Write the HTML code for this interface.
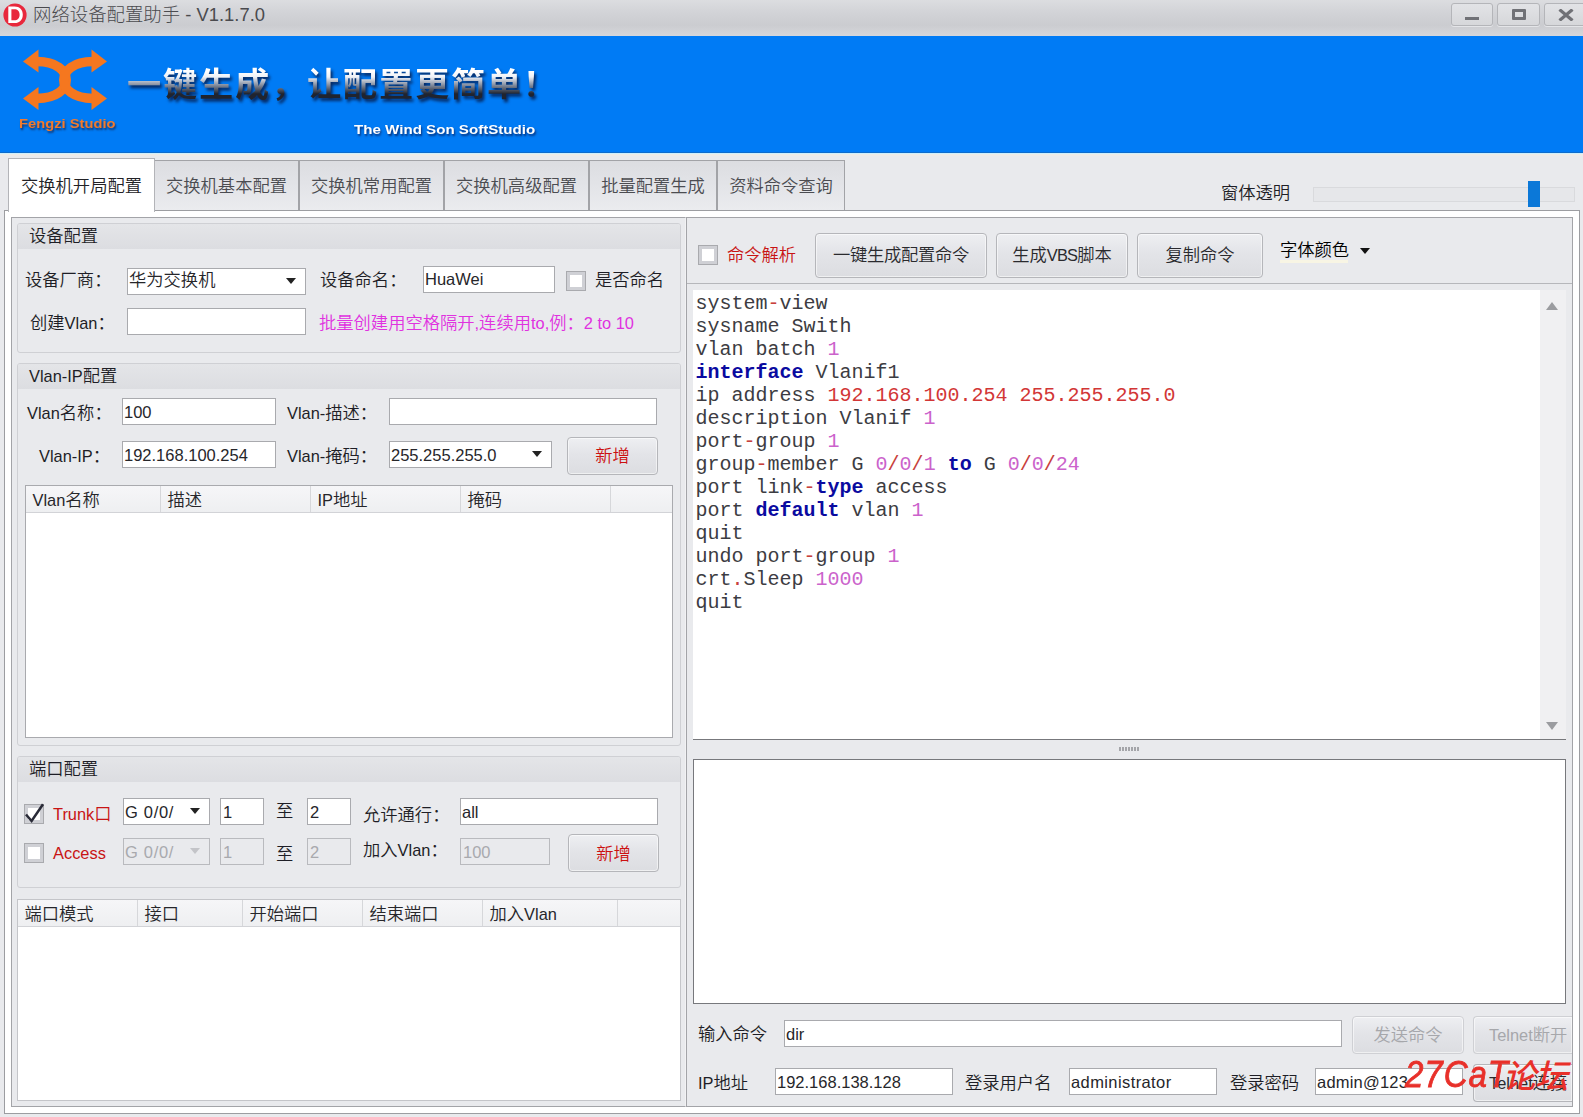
<!DOCTYPE html>
<html lang="zh-CN">
<head>
<meta charset="utf-8">
<title>网络设备配置助手 - V1.1.7.0</title>
<style>
*{box-sizing:border-box;margin:0;padding:0}
html,body{width:1583px;height:1117px;overflow:hidden;background:#e9eaed}
body{position:relative;font-family:"Liberation Sans","Noto Sans CJK SC",sans-serif;font-size:17.3px;color:#1e1e26;font-weight:350}
.a{position:absolute;white-space:nowrap}
.t{position:absolute;white-space:nowrap;line-height:24px;height:24px}
.lat{font-size:16.4px}
/* title bar */
#title{left:0;top:0;width:1583px;height:36px;background:linear-gradient(#dcdde0 0,#d2d3d7 35%,#cbccd0 70%,#d6d7db 100%)}
#title .cap{left:33px;top:3px;font-size:18.4px;line-height:24px;color:#4a4a4e;font-weight:300}
.wb{position:absolute;top:3px;height:23px;border:1px solid #b4b5b9;border-radius:3px;background:linear-gradient(#e2e3e6,#d6d7da);box-shadow:0 1px 0 #e4e5e8}
/* banner */
#banner{left:0;top:36px;width:1583px;height:117px;background:#007bf5}
#fz{left:19px;top:79px;font-size:13.5px;line-height:18px;font-weight:700;color:#f27a2c;transform-origin:0 0;transform:scaleX(1.09);text-shadow:1px 2px 2px rgba(30,30,60,.75);letter-spacing:0}
#slogan{left:127px;top:24px;font-family:"Noto Sans CJK SC",sans-serif;font-weight:700;font-size:34.2px;line-height:44px;letter-spacing:1.800px;transform-origin:0 50%;transform:scaleY(.96);color:transparent;background:linear-gradient(#ffffff 24%,#eef1f7 38%,#808a9c 58%,#20242f 78%);-webkit-background-clip:text;background-clip:text;filter:drop-shadow(2px 3px 1.500px rgba(8,20,60,.8))}
#tws{left:354px;top:85px;font-size:13.5px;line-height:18px;font-weight:700;color:#fff;transform-origin:0 0;transform:scaleX(1.12);text-shadow:1px 2px 2px rgba(10,30,90,.8)}
/* tabs */
.tab{position:absolute;top:160px;height:51px;border:1px solid #a2a3a7;border-bottom:none;background:linear-gradient(#dcdde1,#e3e4e8 50%,#ebecef);color:#4b4c51;font-size:17.3px;line-height:50px;text-align:center;letter-spacing:0}
.tab.on{top:158px;height:54px;background:#fff;color:#222226;line-height:54px;z-index:3;border-color:#b3b4b8}
/* panels */
.pnl{position:absolute;border:1px solid #b9babe;background:#e9eaed}
.grp{position:absolute;border:1px solid #cfd0d4;border-radius:3px;background:#e9eaed}
.grp .hd{position:absolute;left:0;top:0;right:0;height:25px;background:linear-gradient(#e4e5e8,#dcdde1);border-radius:2px 2px 0 0}
.inp{position:absolute;background:#fff;border:1px solid #a9aaae;height:27px;line-height:26px;padding-left:1px;font-size:16.5px;color:#26262a;white-space:nowrap;overflow:hidden}
.inp.dis{background:#e9eaed;color:#a8a9ad;border-color:#b9babe}
.arr{position:absolute;width:0;height:0;border-left:5.5px solid transparent;border-right:5.5px solid transparent;border-top:6px solid #222}
.btn{position:absolute;overflow:hidden;white-space:nowrap;border:1px solid #b5b6ba;border-radius:4px;background:linear-gradient(#eeeff2 0,#e3e4e8 45%,#dcdde1 100%);text-align:center;font-size:17.3px;color:#2a2a2e;box-shadow:inset 0 0 0 1px rgba(255,255,255,.55)}
.btn.red{color:#cc1010}
.btn.dis{color:#a6a7ab;border-color:#cfd0d4}
.cb{position:absolute;width:20px;height:20px;border:1px solid #a9aaae;background:#fff;box-shadow:inset 0 0 0 3px #cfd0d5}
.lv{position:absolute;background:#fff;border:1px solid #a9aaae}
.lv .h{position:absolute;left:0;top:0;right:0;height:27px;background:linear-gradient(#f6f6f8,#eeeff1);border-bottom:1px solid #d2d3d7}
.lv .c{position:absolute;top:0;height:26px;border-right:1px solid #d6d7da;line-height:28px;padding-left:6.5px;font-size:17.3px;color:#26262a;white-space:nowrap}
.red{color:#c81414}
/* code */
#code{left:693px;top:290px;width:873px;height:450px;background:#fff;border-bottom:1px solid #77787c}
#code pre{position:absolute;left:2.5px;top:2px;font-family:"Liberation Mono",monospace;font-size:20px;line-height:23px;color:#3c3c42;font-weight:400}
#code b{color:#0a0aa0;font-weight:700}
#code i{font-style:normal;color:#cb62cb}
#code u{text-decoration:none;color:#d23636}
#code s{text-decoration:none;color:#c8403c}
</style>
</head>
<body>

<!-- TITLE BAR -->
<div id="title" class="a">
  <svg class="a" style="left:1.5px;top:2px" width="26" height="26" viewBox="0 0 26 26"><circle cx="13" cy="13" r="11.600" fill="#e8283c"/><circle cx="13" cy="13" r="10.6" fill="none" stroke="#fff" stroke-width="1.1" opacity=".0"/><path d="M6.300 4.500h6.200c5.200 0 8.300 3.200 8.300 8.300s-3.100 8.300-8.300 8.300h-6.200z M9.400 7.300v11h2.900c3.400 0 5.300-2 5.300-5.500s-1.900-5.500-5.300-5.500z" fill="#fff" fill-rule="evenodd"/></svg>
  <div class="a cap">网络设备配置助手 - V1.1.7.0</div>
  <div class="wb" style="left:1451px;width:42px"><div class="a" style="left:13px;top:13px;width:14px;height:3px;background:#707176"></div></div>
  <div class="wb" style="left:1497px;width:43px"><div class="a" style="left:14px;top:5px;width:14px;height:11px;border:3px solid #707176;border-radius:1px"></div></div>
  <div class="wb" style="left:1544px;width:42px"><svg class="a" style="left:13px;top:5px" width="16" height="12" viewBox="0 0 16 12"><path d="M1.5 0.500 L14.5 11.500 M14.5 0.500 L1.5 11.500" stroke="#707176" stroke-width="3.200"/></svg></div>
</div>

<!-- BANNER -->
<div id="banner" class="a">
  <svg class="a" style="left:14px;top:6px" width="104" height="76" viewBox="14 42 104 76">
    <g fill="none" stroke="#f5771f" stroke-width="9.500">
      <path d="M37 61.500 C 76 61.500 76 98.500 37 98.500"/>
      <path d="M93 61.500 C 54 61.500 54 98.500 93 98.500"/>
    </g>
    <g fill="#f5771f">
      <path d="M23 61.500 L38.500 49.500 L38.500 72.500 Z"/>
      <path d="M23 98.500 L38.500 87 L38.500 110 Z"/>
      <path d="M107 61.500 L91.500 49.500 L91.500 72.500 Z"/>
      <path d="M107 98.500 L91.500 87 L91.500 110 Z"/>
    </g>
  </svg>
  <div class="a" id="fz">Fengzi Studio</div>
  <div class="a" id="slogan">一键生成，让配置更简单！</div>
  <div class="a" id="tws">The Wind Son SoftStudio</div>
</div>

<div class="a" style="left:0;top:152px;width:1583px;height:1px;background:#0f6bcb"></div><div class="a" style="left:0;top:153px;width:1583px;height:1px;background:#cdf0fd"></div><div class="a" style="left:0;top:154px;width:1583px;height:2px;background:#eeebe7"></div>
<!-- TABS -->
<div class="tab on" style="left:8px;width:147px">交换机开局配置</div>
<div class="tab" style="left:154px;width:145px">交换机基本配置</div>
<div class="tab" style="left:299px;width:145px">交换机常用配置</div>
<div class="tab" style="left:444px;width:145px">交换机高级配置</div>
<div class="tab" style="left:589px;width:128px">批量配置生成</div>
<div class="tab" style="left:717px;width:128px">资料命令查询</div>

<!-- TAB PAGE -->
<div class="pnl" id="page" style="left:4px;top:210px;width:1576px;height:904px;background:#fff;border-color:#9c9da1"></div>
<div class="pnl" id="lp" style="left:11px;top:217px;width:675px;height:890px;border-color:#a3a4a8;border-right-color:#f2f2f4"></div>
<div class="pnl" id="rp" style="left:686px;top:217px;width:887px;height:890px;border-color:#a3a4a8"></div>

<!-- slider -->
<div class="t" style="left:1221px;top:181px">窗体透明</div>
<div class="a" style="left:1313px;top:187px;width:262px;height:15px;border:1px solid #d9dadd;background:#e6e7ea"></div>
<div class="a" style="left:1528px;top:181px;width:12px;height:26px;background:#0b78d8"></div>

<!-- GROUP 1 -->
<div class="grp" style="left:17px;top:223px;width:664px;height:130px"><div class="hd"></div></div>
<div class="t" style="left:29px;top:224px">设备配置</div>
<div class="t" style="left:25px;top:268px">设备厂商：</div>
<div class="inp" style="left:127px;top:268px;width:179px;font-size:17.3px;line-height:23px">华为交换机</div><div class="arr" style="left:286px;top:278px"></div>
<div class="t" style="left:320px;top:268px">设备命名：</div>
<div class="inp" style="left:423px;top:266px;width:132px;line-height:24px">HuaWei</div>
<div class="cb" style="left:566px;top:271px"></div>
<div class="t" style="left:595px;top:268px">是否命名</div>
<div class="t" style="left:30px;top:311px">创建<span class="lat">Vlan</span>：</div>
<div class="inp" style="left:127px;top:308px;width:179px"></div>
<div class="t" style="left:319px;top:311px;color:#e032e0">批量创建用空格隔开<span class="lat">,</span>连续用<span class="lat">to,</span>例：<span class="lat">2 to 10</span></div>

<!-- GROUP 2 -->
<div class="grp" style="left:17px;top:363px;width:664px;height:383px"><div class="hd"></div></div>
<div class="t" style="left:29px;top:364px"><span class="lat">Vlan-IP</span>配置</div>
<div class="t" style="left:27px;top:401px"><span class="lat">Vlan</span>名称：</div>
<div class="inp" style="left:122px;top:398px;width:154px">100</div>
<div class="t" style="left:287px;top:401px"><span class="lat">Vlan-</span>描述：</div>
<div class="inp" style="left:389px;top:398px;width:268px"></div>
<div class="t" style="left:39px;top:444px"><span class="lat">Vlan-IP</span>：</div>
<div class="inp" style="left:122px;top:441px;width:154px">192.168.100.254</div>
<div class="t" style="left:287px;top:444px"><span class="lat">Vlan-</span>掩码：</div>
<div class="inp" style="left:389px;top:441px;width:163px">255.255.255.0</div><div class="arr" style="left:532px;top:451px"></div>
<div class="btn red" style="left:567px;top:437px;width:91px;height:38px;line-height:36px">新增</div>
<div class="lv" style="left:25px;top:485px;width:648px;height:253px"><div class="h"></div>
  <div class="c" style="left:0;width:135px"><span class="lat">Vlan</span>名称</div>
  <div class="c" style="left:135px;width:150px">描述</div>
  <div class="c" style="left:285px;width:150px"><span class="lat">IP</span>地址</div>
  <div class="c" style="left:435px;width:150px">掩码</div>
</div>

<!-- GROUP 3 -->
<div class="grp" style="left:17px;top:756px;width:664px;height:132px"><div class="hd"></div></div>
<div class="t" style="left:29px;top:757px">端口配置</div>
<div class="cb" style="left:24px;top:804px"></div>
<svg class="a" style="left:24px;top:800px" width="24" height="26" viewBox="0 0 24 26"><path d="M2 14.500 L7.600 21 L19 4.200" fill="none" stroke="#2a2b38" stroke-width="2.500"/></svg>
<div class="t red" style="left:53px;top:802px"><span class="lat">Trunk</span>口</div>
<div class="inp" style="left:123px;top:798px;width:87px;padding-left:1px;letter-spacing:.7px">G 0/0/</div><div class="arr" style="left:190px;top:808px"></div>
<div class="inp" style="left:220px;top:798px;width:44px;padding-left:2px">1</div>
<div class="t" style="left:276px;top:799px">至</div>
<div class="inp" style="left:307px;top:798px;width:44px;padding-left:2px">2</div>
<div class="t" style="left:363px;top:803px">允许通行：</div>
<div class="inp" style="left:460px;top:798px;width:198px">all</div>
<div class="cb" style="left:24px;top:843px"></div>
<div class="t red" style="left:53px;top:841px"><span class="lat">Access</span></div>
<div class="inp dis" style="left:123px;top:838px;width:87px;padding-left:1px;letter-spacing:.7px">G 0/0/</div><div class="arr" style="left:190px;top:848px;border-top-color:#c3c4c8"></div>
<div class="inp dis" style="left:220px;top:838px;width:44px;padding-left:2px">1</div>
<div class="t" style="left:276px;top:842px">至</div>
<div class="inp dis" style="left:307px;top:838px;width:44px;padding-left:2px">2</div>
<div class="t" style="left:363px;top:838px">加入<span class="lat">Vlan</span>：</div>
<div class="inp dis" style="left:460px;top:838px;width:90px;padding-left:2px">100</div>
<div class="btn red" style="left:568px;top:834px;width:91px;height:38px;line-height:38px">新增</div>

<div class="lv" style="left:17px;top:899px;width:664px;height:202px;border-color:#c4c5c9"><div class="h"></div>
  <div class="c" style="left:0;width:120px">端口模式</div>
  <div class="c" style="left:120px;width:105px">接口</div>
  <div class="c" style="left:225px;width:120px">开始端口</div>
  <div class="c" style="left:345px;width:120px">结束端口</div>
  <div class="c" style="left:465px;width:135px">加入<span class="lat">Vlan</span></div>
</div>

<!-- RIGHT PANEL -->
<div class="a" style="left:687px;top:283px;width:885px;height:1px;background:#b6b7bb"></div>
<div class="cb" style="left:698px;top:245px"></div>
<div class="t" style="left:727px;top:243px;color:#c81414">命令解析</div>
<div class="btn" style="left:815px;top:233px;width:172px;height:45px;line-height:42px;letter-spacing:-.3px">一键生成配置命令</div>
<div class="btn" style="left:996px;top:233px;width:132px;height:45px;line-height:42px">生成<span class="lat" style="letter-spacing:-.8px">VBS</span>脚本</div>
<div class="btn" style="left:1137px;top:233px;width:126px;height:45px;line-height:42px">复制命令</div>
<div class="t" style="left:1280px;top:238px;color:#000">字体颜色</div>
<div class="a" style="left:1280px;top:260px;width:68px;height:3px;background:#f8f5e4"></div>
<div class="arr" style="left:1360px;top:248px;border-top-color:#111"></div>

<div class="a" id="code">
<div class="a" style="left:847px;top:0;width:26px;height:449px;background:#f0f0f2"></div>
<div class="a" style="left:853px;top:12px;width:0;height:0;border-left:6px solid transparent;border-right:6px solid transparent;border-bottom:8px solid #9b9ca0"></div>
<div class="a" style="left:853px;top:432px;width:0;height:0;border-left:6px solid transparent;border-right:6px solid transparent;border-top:8px solid #9b9ca0"></div>
<pre>system<s>-</s>view
sysname Swith
vlan batch <i>1</i>
<b>interface</b> Vlanif1
ip address <u>192.168.100.254 255.255.255.0</u>
description Vlanif <i>1</i>
port<s>-</s>group <i>1</i>
group<s>-</s>member G <i>0</i><s>/</s><i>0</i><s>/</s><i>1</i> <b>to</b> G <i>0</i><s>/</s><i>0</i><s>/</s><i>24</i>
port link<s>-</s><b>type</b> access
port <b>default</b> vlan <i>1</i>
quit
undo port<s>-</s>group <i>1</i>
crt<s>.</s>Sleep <i>1000</i>
quit</pre>
</div>
<!-- splitter grip -->
<div class="a" style="left:1119px;top:747px;width:21px;height:4px;background:repeating-linear-gradient(90deg,#a4a5a9 0,#a4a5a9 1.500px,transparent 1.500px,transparent 3px)"></div>
<!-- output box -->
<div class="a" style="left:693px;top:759px;width:873px;height:245px;background:#fff;border:1px solid #77787c"></div>

<div class="t" style="left:698px;top:1022px">输入命令</div>
<div class="inp" style="left:784px;top:1020px;width:558px">dir</div>
<div class="btn dis" style="left:1352px;top:1016px;width:112px;height:38px;line-height:36px">发送命令</div>
<div class="btn dis" style="left:1473px;top:1016px;width:99px;height:38px;line-height:36px;border-right:none;border-radius:4px 0 0 4px;text-align:left;padding-left:15px"><span class="lat">Telnet</span>断开</div>
<div class="t" style="left:698px;top:1071px"><span class="lat">IP</span>地址</div>
<div class="inp" style="left:775px;top:1068px;width:178px">192.168.138.128</div>
<div class="t" style="left:965px;top:1071px">登录用户名</div>
<div class="inp" style="left:1069px;top:1068px;width:148px;letter-spacing:.4px">administrator</div>
<div class="t" style="left:1230px;top:1071px">登录密码</div>
<div class="inp" style="left:1315px;top:1068px;width:148px;letter-spacing:.2px">admin@123</div>
<div class="btn" style="left:1473px;top:1064px;width:99px;height:38px;line-height:36px;border-right:none;border-radius:4px 0 0 4px;text-align:left;padding-left:15px"><span class="lat">Telnet</span>连接</div>
<!-- watermark -->
<div class="a" style="left:1405px;top:1052px;font-style:italic;font-weight:400;font-size:36px;line-height:46px;color:#e8302a;transform-origin:0 50%;transform:scaleX(.92);letter-spacing:1px;-webkit-text-stroke:.8px #e8302a">27CaT</div><div class="a" style="left:1503px;top:1054px;font-style:italic;font-weight:500;font-size:33px;line-height:46px;color:#e8302a;letter-spacing:-1px">论坛</div>

</body>
</html>
